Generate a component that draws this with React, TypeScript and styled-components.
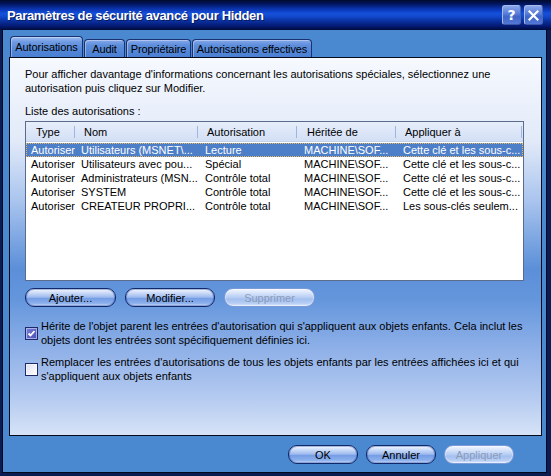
import * as React from 'react'
import styled, { createGlobalStyle } from 'styled-components'

const GlobalStyle = createGlobalStyle`
  html, body {
    margin: 0;
    padding: 0;
    background: #0a1c52;
  }
  body {
    font-family: 'Liberation Sans', Arial, sans-serif;
    font-size: 11px;
    color: #000;
  }
`

const Window = styled.div`
  width: 551px;
  height: 476px;
  display: flex;
  flex-direction: column;
  background: #0a1c52;
  overflow: hidden;
`

const TitleBar = styled.div`
  height: 30px;
  flex: none;
  display: flex;
  align-items: center;
  gap: 3px;
  padding: 0 8px 0 7px;
  background: linear-gradient(to bottom, #000a2e 0%, #02145a 12%, #0a34b0 30%, #1450dc 45%, #1248cc 55%, #0a2e9a 72%, #041870 88%, #000b36 100%);
`

const Title = styled.div`
  flex: 1;
  color: #fff;
  font-weight: bold;
  font-size: 13px;
  letter-spacing: -0.35px;
  padding-top: 1px;
  text-shadow: 1px 1px 0 #061a5c;
  white-space: nowrap;
`

const CaptionButton = styled.div`
  width: 19px;
  height: 20px;
  box-sizing: border-box;
  display: flex;
  align-items: center;
  justify-content: center;
  border: 1px solid #a8bcec;
  border-right-color: #4c66b0;
  border-bottom-color: #3c56a4;
  border-radius: 3px;
  background: linear-gradient(to bottom, #8aa6ea 0%, #5c80da 40%, #3f64c8 60%, #5478d6 100%);
  color: #fff;
  font-family: 'DejaVu Sans', sans-serif;
  font-weight: bold;
  font-size: 14px;
  line-height: 1;
`

const Frame = styled.div`
  flex: 1;
  display: flex;
  padding: 0 4px 3px 2px;
  min-height: 0;
`

const Body = styled.div`
  flex: 1;
  display: flex;
  flex-direction: column;
  border: 1px solid #02081c;
  border-top: none;
  background: #4a88cf;
  padding: 6px 4px 0 6px;
`

const TabStrip = styled.div`
  height: 21px;
  flex: none;
  display: flex;
  align-items: flex-end;
  gap: 1px;
  padding-left: 1px;
`

const Tab = styled.div<{ $width: number; $active?: boolean }>`
  width: ${p => p.$width}px;
  height: ${p => (p.$active ? 21 : 18)}px;
  box-sizing: border-box;
  display: flex;
  align-items: center;
  justify-content: center;
  border: 1px solid #1b3270;
  border-bottom: none;
  border-radius: 4px 4px 0 0;
  background: ${p =>
    p.$active
      ? 'linear-gradient(to bottom, #9dbcf0 0%, #6e9ae2 25%, #4f84d6 70%, #4a80d2 100%)'
      : 'linear-gradient(to bottom, #86a8ea 0%, #5e8edc 30%, #4a7fd2 100%)'};
  box-shadow: inset 1px 1px 0 rgba(255, 255, 255, 0.35);
  white-space: nowrap;
  letter-spacing: -0.1px;
  padding-top: ${p => (p.$active ? 0 : 1)}px;
`

const Panel = styled.div`
  height: 379px;
  flex: none;
  box-sizing: border-box;
  border: 1px solid #050a1c;
  background: linear-gradient(to bottom, #f6f9fe 0%, #e2eaf9 22%, #a9c4ee 38%, #5b8fd8 56%, #6496dc 64%, #8eb0e8 77%, #b4caf0 90%, #d6e3f7 100%);
  padding: 9px 0 0 15px;
  display: flex;
  flex-direction: column;
`

const Text = styled.div<{ $top: number }>`
  margin-top: ${p => p.$top}px;
  line-height: 14px;
  white-space: nowrap;
`

const ListBox = styled.div`
  margin-top: 3px;
  width: 499px;
  height: 160px;
  box-sizing: border-box;
  border: 1px solid #5b6b8b;
  background: #fff;
  overflow: hidden;
`

const columns = '49px 123px 99px 99px 126px'

const HeaderRow = styled.div`
  height: 20px;
  display: grid;
  grid-template-columns: ${columns};
  background: linear-gradient(to bottom, #e6eefb 0%, #d3dff5 100%);
  border-bottom: 1px solid #c4d2ee;
  box-sizing: border-box;
`

const HeaderCell = styled.div<{ $pad: number }>`
  display: flex;
  align-items: center;
  padding-left: ${p => p.$pad}px;
  background: linear-gradient(#9fb4de, #9fb4de) right center / 1px 12px no-repeat;
  white-space: nowrap;
`

const Rows = styled.div`
  padding-top: 1px;
`

const Row = styled.div<{ $selected?: boolean }>`
  height: 14px;
  display: grid;
  grid-template-columns: ${columns};
  line-height: 14px;
  background: ${p => (p.$selected ? '#4d7ec8' : 'transparent')};
  color: ${p => (p.$selected ? '#fff' : '#000')};
  outline: ${p => (p.$selected ? '1px dotted #e8b860' : 'none')};
  outline-offset: -1px;
`

const Cell = styled.div<{ $pad: number }>`
  padding-left: ${p => p.$pad}px;
  white-space: nowrap;
  overflow: hidden;
`

const ButtonRow = styled.div<{ $top: number }>`
  margin-top: ${p => p.$top}px;
  display: flex;
  gap: 9px;
`

const Button = styled.div<{ $width: number; $disabled?: boolean }>`
  width: ${p => p.$width}px;
  height: 19px;
  box-sizing: border-box;
  display: flex;
  align-items: center;
  justify-content: center;
  border: 1px solid ${p => (p.$disabled ? '#7c9ad8' : '#10296c')};
  border-radius: 9px;
  background: ${p =>
    p.$disabled
      ? 'linear-gradient(to bottom, #f2f6ff 0%, #d6e3fa 25%, #b6cdf3 50%, #a4c0f0 60%, #b8cff4 85%, #dde8fb 100%)'
      : 'linear-gradient(to bottom, #f4f8ff 0%, #cddcf9 22%, #9ebbee 48%, #769ee6 56%, #8cb0ec 84%, #d0defa 100%)'};
  box-shadow: inset 0 0 0 1px ${p => (p.$disabled ? 'rgba(255,255,255,0.4)' : 'rgba(40,70,150,0.35)')};
  color: ${p => (p.$disabled ? '#8b9bb9' : '#000')};
  white-space: nowrap;
`

const Footer = styled.div`
  display: flex;
  justify-content: flex-end;
  gap: 8px;
  padding: 9px 28px 0 0;
`

const CheckRow = styled.div<{ $top: number }>`
  margin-top: ${p => p.$top}px;
  display: flex;
  align-items: center;
  gap: 3px;
`

const Box = styled.div<{ $checked?: boolean }>`
  width: 13px;
  height: 13px;
  flex: none;
  box-sizing: border-box;
  border: 1px solid #1c2a6a;
  display: flex;
  align-items: center;
  justify-content: center;
  background: ${p =>
    p.$checked
      ? 'linear-gradient(to bottom right, #7a7ed8, #4a50b4)'
      : 'linear-gradient(to bottom right, #dcdff4, #ffffff)'};
  box-shadow: inset 0 0 0 1px ${p => (p.$checked ? 'rgba(200,205,245,0.7)' : 'rgba(255,255,255,0.6)')};
`

const CheckLabel = styled.div`
  line-height: 14px;
  white-space: nowrap;
`

type Entry = [string, string, string, string, string]

const entries: Entry[] = [
  ['Autoriser', 'Utilisateurs (MSNET\\...', 'Lecture', 'MACHINE\\SOF...', 'Cette clé et les sous-c...'],
  ['Autoriser', 'Utilisateurs avec pou...', 'Spécial', 'MACHINE\\SOF...', 'Cette clé et les sous-c...'],
  ['Autoriser', 'Administrateurs (MSN...', 'Contrôle total', 'MACHINE\\SOF...', 'Cette clé et les sous-c...'],
  ['Autoriser', 'SYSTEM', 'Contrôle total', 'MACHINE\\SOF...', 'Cette clé et les sous-c...'],
  ['Autoriser', 'CREATEUR PROPRI...', 'Contrôle total', 'MACHINE\\SOF...', 'Les sous-clés seulem...'],
]

const headers = ['Type', 'Nom', 'Autorisation', 'Héritée de', 'Appliquer à']
const headerPad = [10, 9, 9, 10, 9]
const cellPad = [5, 6, 7, 7, 7]

const Check = () => (
  <svg width="9" height="9" viewBox="0 0 9 9">
    <polyline points="1.5,4.5 3.5,6.5 7.5,2" fill="none" stroke="#fff" strokeWidth="1.8" />
  </svg>
)

const CloseGlyph = () => (
  <svg width="11" height="11" viewBox="0 0 11 11">
    <path d="M1.5 1.5 L9.5 9.5 M9.5 1.5 L1.5 9.5" stroke="#fff" strokeWidth="2.2" strokeLinecap="square" />
  </svg>
)

export default function App() {
  return (
    <Window>
      <GlobalStyle />
      <TitleBar>
        <Title>Paramètres de sécurité avancé pour Hidden</Title>
        <CaptionButton>?</CaptionButton>
        <CaptionButton><CloseGlyph /></CaptionButton>
      </TitleBar>
      <Frame>
        <Body>
          <TabStrip>
            <Tab $width={73} $active>Autorisations</Tab>
            <Tab $width={41}>Audit</Tab>
            <Tab $width={65}>Propriétaire</Tab>
            <Tab $width={120}>Autorisations effectives</Tab>
          </TabStrip>
          <Panel>
            <Text $top={0}>
              Pour afficher davantage d'informations concernant les autorisations spéciales, sélectionnez une
              <br />
              autorisation puis cliquez sur Modifier.
            </Text>
            <Text $top={9}>Liste des autorisations :</Text>
            <ListBox>
              <HeaderRow>
                {headers.map((h, i) => (
                  <HeaderCell key={h} $pad={headerPad[i]}>{h}</HeaderCell>
                ))}
              </HeaderRow>
              <Rows>
                {entries.map((e, r) => (
                  <Row key={r} $selected={r === 0}>
                    {e.map((c, i) => (
                      <Cell key={i} $pad={cellPad[i]}>{c}</Cell>
                    ))}
                  </Row>
                ))}
              </Rows>
            </ListBox>
            <ButtonRow $top={7}>
              <Button $width={91}>Ajouter...</Button>
              <Button $width={90}>Modifier...</Button>
              <Button $width={91} $disabled>Supprimer</Button>
            </ButtonRow>
            <CheckRow $top={12}>
              <Box $checked><Check /></Box>
              <CheckLabel>
                Hérite de l'objet parent les entrées d'autorisation qui s'appliquent aux objets enfants. Cela inclut les
                <br />
                objets dont les entrées sont spécifiquement définies ici.
              </CheckLabel>
            </CheckRow>
            <CheckRow $top={8}>
              <Box />
              <CheckLabel>
                Remplacer les entrées d'autorisations de tous les objets enfants par les entrées affichées ici et qui
                <br />
                s'appliquent aux objets enfants
              </CheckLabel>
            </CheckRow>
          </Panel>
          <Footer>
            <Button $width={70}>OK</Button>
            <Button $width={70}>Annuler</Button>
            <Button $width={70} $disabled>Appliquer</Button>
          </Footer>
        </Body>
      </Frame>
    </Window>
  )
}
